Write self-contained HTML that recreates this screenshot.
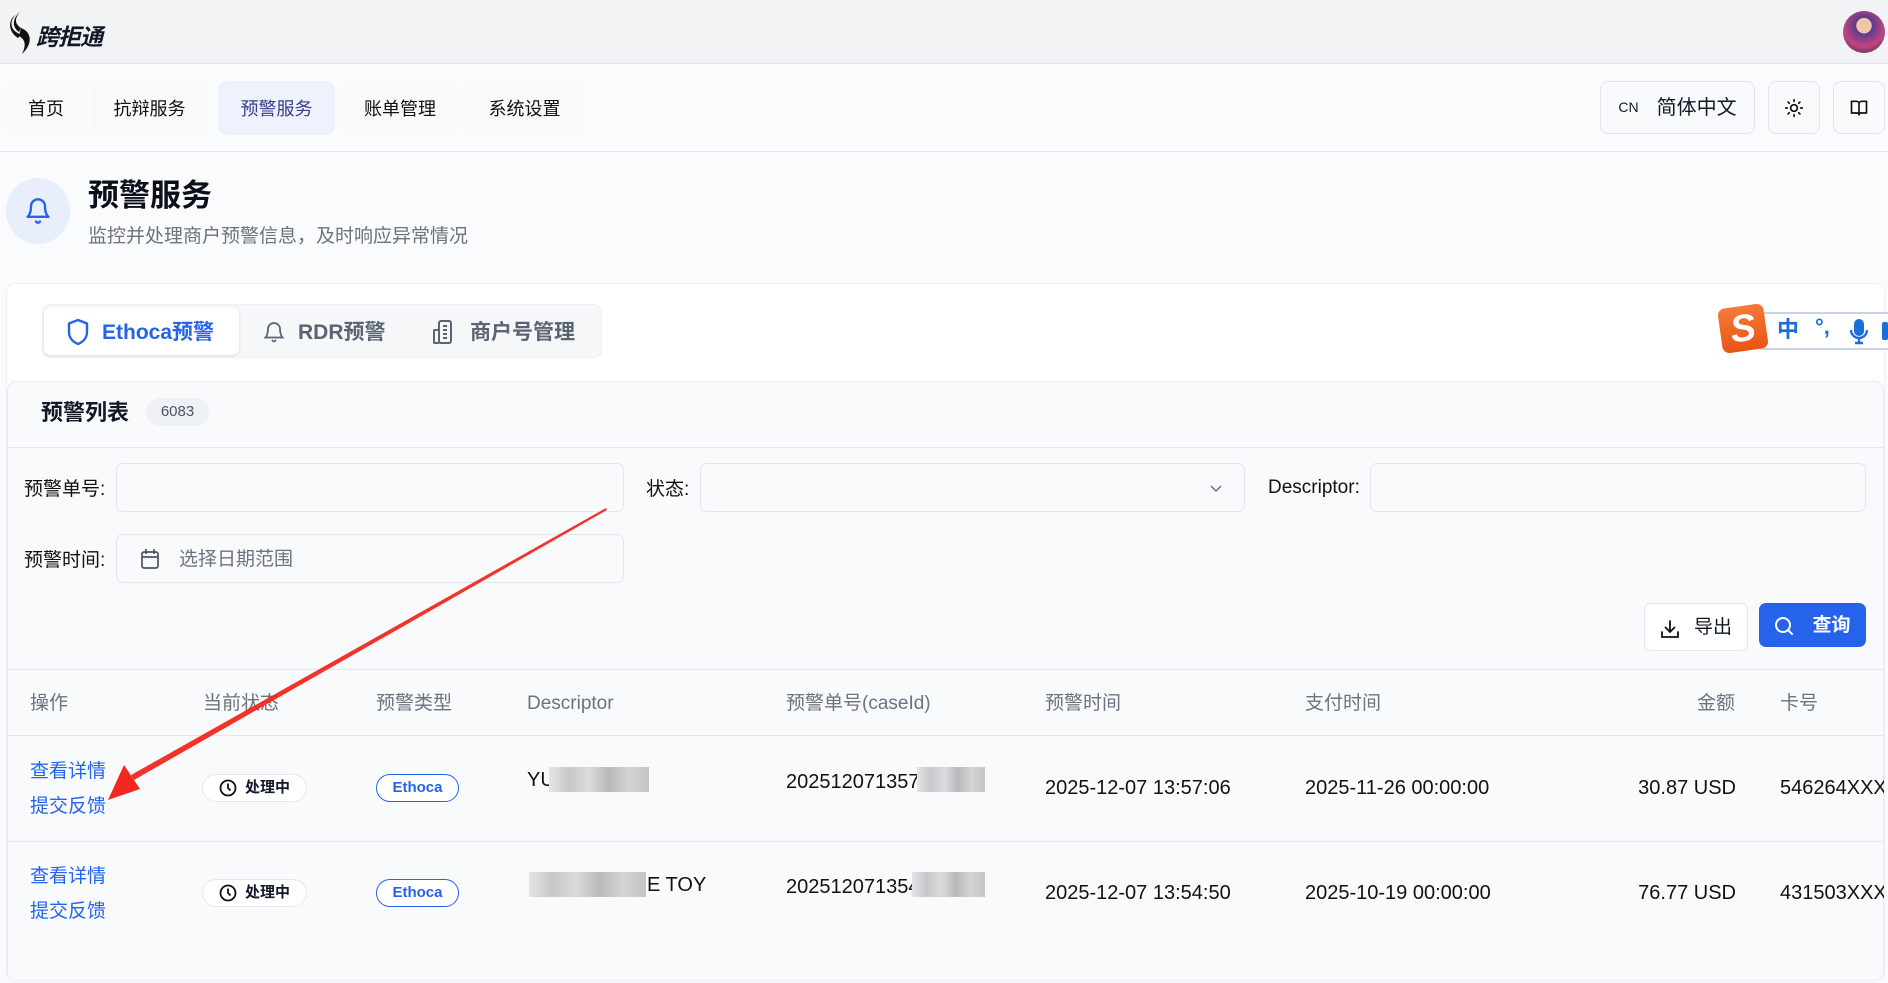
<!DOCTYPE html>
<html><head><meta charset="utf-8">
<style>
*{margin:0;padding:0;box-sizing:border-box}
body{width:1888px;height:942px;overflow:hidden;background:#fafbfc;font-family:"Liberation Sans","Noto Sans CJK SC",sans-serif;color:#111827;position:relative}
.abs{position:absolute;line-height:1.2}
.dn{transform:translateY(3px)}
.hdr{left:0;top:0;width:1888px;height:64px;background:#f2f3f5;border-bottom:1px solid #e3e5e9}
.nav{top:81px;height:54px;border-radius:8px;background:#f8f9fa;font-size:18px;display:flex;align-items:center;justify-content:center;color:#111;padding-top:3px}
.rb{top:81px;height:53px;border:1px solid #e2e5ea;border-radius:8px;background:#f9fafb;display:flex;align-items:center;justify-content:center}
.lbl{font-size:19px;color:#111}
.inp{border:1px solid #e3e7ed;border-radius:7px;background:#f9fafc}
.th{top:693px;font-size:19px;color:#6b7280}
.link{font-size:19px;color:#2563eb}
.pill{height:28px;border-radius:14px;display:flex;align-items:center;justify-content:center;font-size:15px;font-weight:bold}
.td{font-size:20px;color:#111}
.blur{background:linear-gradient(90deg,#e5e5e7,#c8c8cb 20%,#dcdcde 40%,#b9b9bc 60%,#d4d4d6 80%,#c4c4c6)}
</style></head><body>
<div class="abs hdr"></div>
<svg class="abs" style="left:6px;top:10px" width="30" height="46" viewBox="0 0 30 46"><path d="M14 2 C4 7 3 17 10 22 L15 25 L12 28 C4 23 1 13 8 6Z" fill="#111"/><path d="M15 18 C26 22 27 34 16 44 C20 36 20 30 13 26Z" fill="#111"/><path d="M14 2 C8 9 9 14 15 18 L13 22 C6 17 6 9 14 2Z" fill="#111"/></svg>
<div class="abs" style="left:36px;top:24px;font-size:23px;font-weight:bold;font-style:italic;letter-spacing:-1px">跨拒通</div>
<div class="abs" style="left:1843px;top:11px;width:42px;height:42px;border-radius:50%;background:radial-gradient(circle at 50% 35%,#f0c6a8 0 22%,#5a3b8c 23%,#c0457e 60%,#2a2a55)"></div>

<div class="abs nav" style="left:6px;width:80px">首页</div>
<div class="abs nav" style="left:92px;width:115px">抗辩服务</div>
<div class="abs nav" style="left:218px;width:117px;background:#eef2fd;color:#3d3a8c">预警服务</div>
<div class="abs nav" style="left:342px;width:116px">账单管理</div>
<div class="abs nav" style="left:466px;width:117px">系统设置</div>

<div class="abs rb" style="left:1600px;width:155px"><span style="font-size:14px;margin-right:18px">CN</span><span style="font-size:20px">简体中文</span></div>
<div class="abs rb" style="left:1768px;width:52px"><svg width="20" height="20" viewBox="0 0 24 24" fill="none" stroke="#111" stroke-width="2" stroke-linecap="round"><circle cx="12" cy="12" r="4"/><path d="M12 2v2M12 20v2M4.9 4.9l1.4 1.4M17.7 17.7l1.4 1.4M2 12h2M20 12h2M4.9 19.1l1.4-1.4M17.7 6.3l1.4-1.4"/></svg></div>
<div class="abs rb" style="left:1833px;width:52px"><svg width="20" height="20" viewBox="0 0 24 24" fill="none" stroke="#111" stroke-width="2" stroke-linejoin="round"><path d="M12 7v14M3 18V4h6a3 3 0 0 1 3 3 3 3 0 0 1 3-3h6v14h-7a2 2 0 0 0-2 2 2 2 0 0 0-2-2z"/></svg></div>
<div class="abs" style="left:0;top:151px;width:1888px;height:1px;background:#e5e7eb"></div>

<div class="abs" style="left:6px;top:178px;width:64px;height:66px;border-radius:50%;background:#e8eefb;display:flex;align-items:center;justify-content:center"><svg width="28" height="30" viewBox="0 0 24 24" fill="none" stroke="#2563eb" stroke-width="2" stroke-linecap="round" stroke-linejoin="round"><path d="M6 8a6 6 0 0 1 12 0c0 7 3 9 3 9H3s3-2 3-9"/><path d="M10.3 21a1.9 1.9 0 0 0 3.4 0"/></svg></div>
<div class="abs" style="left:88px;top:177px;font-size:31px;font-weight:bold;color:#0b0f19">预警服务</div>
<div class="abs" style="left:88px;top:226px;font-size:19px;color:#6b7280">监控并处理商户预警信息，及时响应异常情况</div>

<div class="abs" style="left:6px;top:283px;width:1879px;height:700px;background:#fff;border:1px solid #eef0f3;border-radius:9px"></div>
<div class="abs" style="left:42px;top:304px;width:560px;height:54px;background:#f6f7f9;border:1px solid #eef0f3;border-radius:8px"></div>
<div class="abs" style="left:44px;top:307px;width:195px;height:48px;background:#fff;border-radius:7px;box-shadow:0 1px 3px rgba(0,0,0,.12)"></div>
<svg class="abs" style="left:66px;top:318px" width="24" height="28" viewBox="0 0 24 28" fill="none" stroke="#2563eb" stroke-width="2.4" stroke-linejoin="round"><path d="M12 2 L21 5.5 V14 C21 20 17 24 12 26 C7 24 3 20 3 14 V5.5Z"/></svg>
<div class="abs" style="left:102px;top:320px;font-size:21px;font-weight:bold;color:#2563eb">Ethoca预警</div>
<svg class="abs" style="left:262px;top:318px" width="24" height="28" viewBox="0 0 24 24" fill="none" stroke="#5b6472" stroke-width="1.8" stroke-linecap="round"><path d="M6 9a6 6 0 0 1 12 0c0 6 2.5 8.5 2.5 8.5h-17S6 15 6 9"/><path d="M10.5 20.5a1.7 1.7 0 0 0 3 0"/></svg>
<div class="abs" style="left:298px;top:320px;font-size:21px;font-weight:bold;color:#5b6472">RDR预警</div>
<svg class="abs" style="left:432px;top:318px" width="24" height="28" viewBox="0 0 24 28" fill="none" stroke="#5b6472" stroke-width="2"><rect x="7" y="3" width="12" height="22" rx="2"/><rect x="2" y="12" width="5" height="13" rx="1"/><path d="M11 8h4M11 12h4M11 16h4M11 20h4"/></svg>
<div class="abs" style="left:470px;top:320px;font-size:21px;font-weight:bold;color:#5b6472">商户号管理</div>

<div class="abs" style="left:1760px;top:312px;width:128px;height:38px;background:#fff;border:2px solid #c8d4e6;border-right:none"></div>
<div class="abs" style="left:1720px;top:306px;width:46px;height:45px;border-radius:7px;background:linear-gradient(#f47a3a,#ea5412);transform:rotate(-8deg);color:#fff;font-size:38px;font-weight:bold;font-style:italic;display:flex;align-items:center;justify-content:center;line-height:1">S</div>
<div class="abs" style="left:1777px;top:317px;font-size:22px;font-weight:bold;color:#1a6fd8">中</div>
<div class="abs" style="left:1815px;top:314px;font-size:22px;font-weight:bold;color:#1a6fd8">°,</div>
<svg class="abs" style="left:1850px;top:318px" width="18" height="28" viewBox="0 0 18 28"><rect x="4" y="1" width="10" height="17" rx="5" fill="#1a6fd8"/><path d="M1 12a8 8 0 0 0 16 0M9 20v4M5 25h8" stroke="#1a6fd8" stroke-width="2.4" fill="none"/></svg>
<div class="abs" style="left:1882px;top:322px;width:6px;height:18px;background:#1a6fd8;border-radius:2px"></div>

<div class="abs" style="left:7px;top:381px;width:1877px;height:600px;background:#f8fafc;border:1px solid #e8ebf0;border-radius:9px"></div>
<div class="abs" style="left:41px;top:400px;font-size:22px;font-weight:bold">预警列表</div>
<div class="abs" style="left:146px;top:398px;width:63px;height:28px;border-radius:14px;background:#eef1f5;font-size:15px;color:#4b5563;display:flex;align-items:center;justify-content:center">6083</div>
<div class="abs" style="left:7px;top:447px;width:1877px;height:1px;background:#e5e8ed"></div>

<div class="abs lbl" style="left:24px;top:479px">预警单号:</div>
<div class="abs inp" style="left:116px;top:463px;width:508px;height:49px"></div>
<div class="abs lbl" style="left:646px;top:479px">状态:</div>
<div class="abs inp" style="left:700px;top:463px;width:545px;height:49px"></div>
<svg class="abs" style="left:1208px;top:480px" width="16" height="16" viewBox="0 0 16 16" fill="none" stroke="#6b7280" stroke-width="1.5"><path d="M3 6l5 5 5-5"/></svg>
<div class="abs lbl" style="left:1268px;top:477px">Descriptor:</div>
<div class="abs inp" style="left:1370px;top:463px;width:496px;height:49px"></div>

<div class="abs lbl" style="left:24px;top:550px">预警时间:</div>
<div class="abs inp" style="left:116px;top:534px;width:508px;height:49px"></div>
<svg class="abs" style="left:140px;top:548px" width="20" height="22" viewBox="0 0 20 22" fill="none" stroke="#4b5563" stroke-width="1.7"><rect x="2" y="4" width="16" height="16" rx="2"/><path d="M2 9h16M6 1v5M14 1v5"/></svg>
<div class="abs" style="left:179px;top:549px;font-size:19px;color:#6b7280">选择日期范围</div>

<div class="abs" style="left:1644px;top:603px;width:104px;height:48px;background:#fff;border:1px solid #e2e5ea;border-radius:7px;display:flex;align-items:center;justify-content:center;font-size:19px;padding-top:3px"><svg width="20" height="20" viewBox="0 0 20 20" fill="none" stroke="#111" stroke-width="1.8" stroke-linecap="round" style="margin-right:14px"><path d="M10 2v11M5.5 8.5 10 13l4.5-4.5M2 13v5h16v-5"/></svg>导出</div>
<div class="abs" style="left:1759px;top:603px;width:107px;height:44px;background:#2563eb;border-radius:7px;display:flex;align-items:center;justify-content:center;font-size:19px;color:#fff;font-weight:bold;padding-top:2px"><svg width="20" height="20" viewBox="0 0 20 20" fill="none" stroke="#fff" stroke-width="2" stroke-linecap="round" style="margin-right:18px"><circle cx="9" cy="9" r="7"/><path d="M14 14l4 4"/></svg>查询</div>

<div class="abs" style="left:7px;top:669px;width:1877px;height:1px;background:#e3e7ed"></div>
<div class="abs th" style="left:30px">操作</div>
<div class="abs th" style="left:203px">当前状态</div>
<div class="abs th" style="left:376px">预警类型</div>
<div class="abs th" style="left:527px">Descriptor</div>
<div class="abs th" style="left:786px">预警单号(caseId)</div>
<div class="abs th" style="left:1045px">预警时间</div>
<div class="abs th" style="left:1305px">支付时间</div>
<div class="abs th" style="left:1697px">金额</div>
<div class="abs th" style="left:1780px">卡号</div>
<div class="abs" style="left:7px;top:735px;width:1877px;height:1px;background:#e3e7ed"></div>
<div class="abs" style="left:7px;top:841px;width:1877px;height:1px;background:#e3e7ed"></div>

<!-- row 1 -->
<div class="abs link" style="left:30px;top:761px">查看详情</div>
<div class="abs link" style="left:30px;top:796px">提交反馈</div>
<div class="abs pill" style="left:202px;top:774px;width:105px;background:#fff;border:1px solid #e5e7eb"><svg width="18" height="18" viewBox="0 0 18 18" fill="none" stroke="#111" stroke-width="1.8" style="margin-right:8px"><circle cx="9" cy="9" r="7.5"/><path d="M9 4.5V9l2.5 2.5"/></svg>处理中</div>
<div class="abs pill" style="left:376px;top:774px;width:83px;border:1.5px solid #2563eb;color:#2563eb;background:#fff">Ethoca</div>
<div class="abs td" style="left:527px;top:768px">YU</div>
<div class="abs blur" style="left:549px;top:767px;width:100px;height:25px"></div>
<div class="abs td" style="left:786px;top:770px">20251207135706</div>
<div class="abs blur" style="left:917px;top:767px;width:68px;height:25px"></div>
<div class="abs td" style="left:1045px;top:776px">2025-12-07 13:57:06</div>
<div class="abs td" style="left:1305px;top:776px">2025-11-26 00:00:00</div>
<div class="abs td" style="left:1616px;top:776px;width:120px;text-align:right">30.87 USD</div>
<div class="abs td" style="left:1780px;top:776px;width:104px;overflow:hidden;white-space:nowrap">546264XXXXXX</div>

<!-- row 2 -->
<div class="abs link" style="left:30px;top:866px">查看详情</div>
<div class="abs link" style="left:30px;top:901px">提交反馈</div>
<div class="abs pill" style="left:202px;top:879px;width:105px;background:#fff;border:1px solid #e5e7eb"><svg width="18" height="18" viewBox="0 0 18 18" fill="none" stroke="#111" stroke-width="1.8" style="margin-right:8px"><circle cx="9" cy="9" r="7.5"/><path d="M9 4.5V9l2.5 2.5"/></svg>处理中</div>
<div class="abs pill" style="left:376px;top:879px;width:83px;border:1.5px solid #2563eb;color:#2563eb;background:#fff">Ethoca</div>
<div class="abs blur" style="left:529px;top:872px;width:117px;height:25px"></div>
<div class="abs td" style="left:647px;top:873px">E TOY</div>
<div class="abs td" style="left:786px;top:875px">202512071354</div>
<div class="abs blur" style="left:912px;top:872px;width:73px;height:25px"></div>
<div class="abs td" style="left:1045px;top:881px">2025-12-07 13:54:50</div>
<div class="abs td" style="left:1305px;top:881px">2025-10-19 00:00:00</div>
<div class="abs td" style="left:1616px;top:881px;width:120px;text-align:right">76.77 USD</div>
<div class="abs td" style="left:1780px;top:881px;width:104px;overflow:hidden;white-space:nowrap">431503XXXXXX</div>

<!-- red arrow -->
<svg class="abs" style="left:0;top:0" width="1888" height="942" viewBox="0 0 1888 942">
<polygon points="606,508 607,510 134,780 131,775" fill="#f2281f" opacity="0.95"/>
<polygon points="108,800 124,765 140,789" fill="#f2281f"/>
</svg>
</body></html>
